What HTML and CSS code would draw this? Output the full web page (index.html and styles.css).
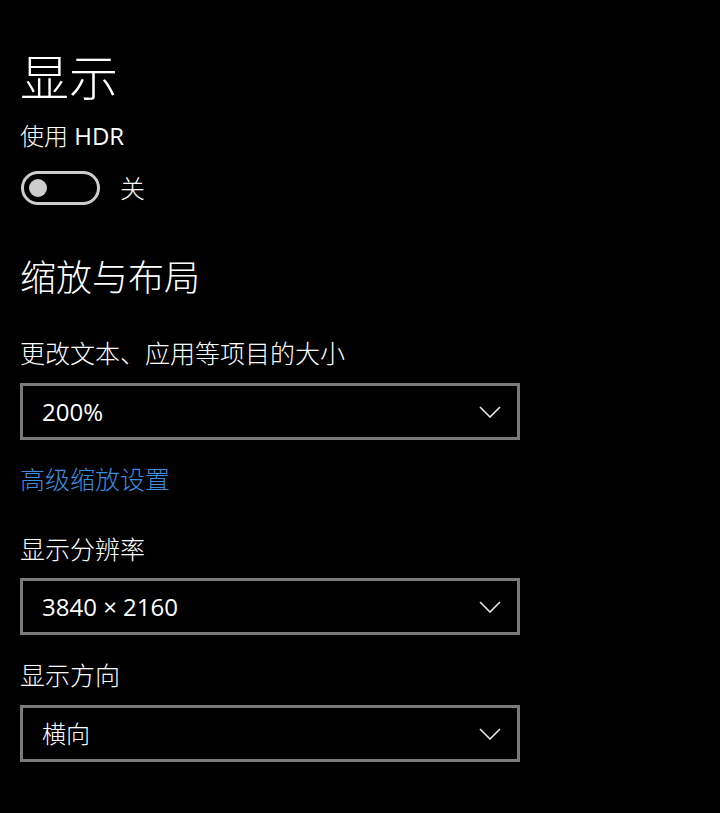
FILE: index.html
```html
<!DOCTYPE html>
<html lang="zh-CN">
<head>
<meta charset="utf-8">
<title>显示</title>
<link rel="stylesheet" href="styles.css">
</head>
<body>
<main class="page">
  <h1 class="title">显示</h1>
  <div class="label hdr-label">使用 <span class="latin">HDR</span></div>
  <div class="toggle-row">
    <span class="toggle"><span class="knob"></span></span>
    <span class="toggle-text">关</span>
  </div>

  <h2 class="heading">缩放与布局</h2>
  <div class="label first-label">更改文本、应用等项目的大小</div>
  <div class="select sel-scale">
    <span class="select-value latin">200%</span>
    <svg class="chevron" width="22" height="12" viewBox="0 0 22 12"><path d="M1 1 L11 11 L21 1" fill="none" stroke="#e6e6e6" stroke-width="1.6"/></svg>
  </div>
  <a class="link" href="#">高级缩放设置</a>

  <div class="label res-label">显示分辨率</div>
  <div class="select sel-res">
    <span class="select-value latin">3840 × 2160</span>
    <svg class="chevron" width="22" height="12" viewBox="0 0 22 12"><path d="M1 1 L11 11 L21 1" fill="none" stroke="#e6e6e6" stroke-width="1.6"/></svg>
  </div>

  <div class="label ori-label">显示方向</div>
  <div class="select sel-ori">
    <span class="select-value">横向</span>
    <svg class="chevron" width="22" height="12" viewBox="0 0 22 12"><path d="M1 1 L11 11 L21 1" fill="none" stroke="#e6e6e6" stroke-width="1.6"/></svg>
  </div>
</main>
</body>
</html>
```

FILE: styles.css
```css
html, body {
  margin: 0;
  padding: 0;
  background: #000;
}
body {
  color: #fff;
  font-family: "Open Sans", "Noto Sans CJK SC", sans-serif;
  font-weight: 300;
}
.latin {
  font-weight: 400;
}
.page {
  padding: 47px 0 0 20px;
  display: flex;
  flex-direction: column;
  align-items: flex-start;
}
.title {
  margin: 0;
  font-size: 49px;
  line-height: 60px;
  font-weight: 300;
}
.label {
  font-size: 25px;
  line-height: 32px;
}
.hdr-label {
  margin-top: 13px;
  font-size: 24px;
}
.toggle-row {
  margin-top: 19px;
  display: flex;
  align-items: center;
  gap: 20px;
}
.toggle {
  box-sizing: border-box;
  width: 79px;
  height: 34px;
  border: 3px solid #cdcdcd;
  border-radius: 17px;
  display: flex;
  align-items: center;
  padding-left: 5px;
  margin-left: 1px;
}
.knob {
  width: 18px;
  height: 18px;
  border-radius: 50%;
  background: #cdcdcd;
}
.toggle-text {
  font-size: 25px;
  line-height: 32px;
}
.heading {
  margin: 51px 0 0;
  font-size: 36px;
  line-height: 44px;
  font-weight: 300;
}
.first-label {
  margin-top: 37px;
}
.select {
  box-sizing: border-box;
  width: 500px;
  height: 57px;
  border: 3px solid #7a7a7a;
  display: flex;
  align-items: center;
  justify-content: space-between;
  padding: 0 16px 0 19px;
}
.select-value {
  font-size: 24px;
  line-height: 32px;
}
.sel-scale {
  margin-top: 14px;
}
.link {
  margin-top: 23px;
  color: #3a8ddf;
  text-decoration: none;
  font-size: 25px;
  line-height: 32px;
}
.res-label {
  margin-top: 38px;
}
.sel-res {
  margin-top: 13px;
}
.ori-label {
  margin-top: 24px;
}
.sel-ori {
  margin-top: 14px;
}
```
